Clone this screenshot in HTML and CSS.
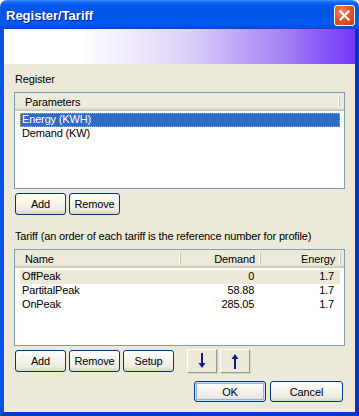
FILE: index.html
```html
<!DOCTYPE html>
<html>
<head>
<meta charset="utf-8">
<title>Register/Tariff</title>
<link rel="stylesheet" href="styles.css">
</head>
<body>
<div class="window">
  <div class="titlebar">
    <span class="title">Register/Tariff</span>
    <span class="close"><svg width="11" height="11" viewBox="0 0 11 11"><path d="M1.5 1.5L9.5 9.5M9.5 1.5L1.5 9.5" stroke="#fff" stroke-width="2.2" stroke-linecap="square"/></svg></span>
  </div>
  <div class="frame">
    <div class="banner"></div>
    <div class="content">
      <div class="label label-reg">Register</div>
      <div class="listbox">
        <div class="lv-head">
          <div class="hcol col-param">Parameters</div>
        </div>
        <div class="lv-body">
          <div class="row focused"><div class="cell col-param">Energy (KWH)</div></div>
          <div class="row"><div class="cell col-param">Demand (KW)</div></div>
        </div>
      </div>
      <div class="btnrow">
        <button class="btn btn-std">Add</button>
        <button class="btn btn-std">Remove</button>
      </div>
      <div class="label label-tariff">Tariff (an order of each tariff is the reference number for profile)</div>
      <div class="listbox">
        <div class="lv-head">
          <div class="hcol col-name">Name</div>
          <div class="hcol col-num">Demand</div>
          <div class="hcol col-num">Energy</div>
        </div>
        <div class="lv-body">
          <div class="row inactive-sel"><div class="cell col-name">OffPeak</div><div class="cell col-num">0</div><div class="cell col-num">1.7</div></div>
          <div class="row"><div class="cell col-name">PartitalPeak</div><div class="cell col-num">58.88</div><div class="cell col-num">1.7</div></div>
          <div class="row"><div class="cell col-name">OnPeak</div><div class="cell col-num">285.05</div><div class="cell col-num">1.7</div></div>
        </div>
      </div>
      <div class="btnrow">
        <button class="btn btn-std">Add</button>
        <button class="btn btn-std">Remove</button>
        <button class="btn btn-std">Setup</button>
        <button class="arrowbtn arrow-first"><svg width="8" height="16" viewBox="0 0 8 16"><path d="M3 0H5V10H7.5L4 15L0.5 10H3Z" fill="#0a1a8a"/></svg></button>
        <button class="arrowbtn"><svg width="8" height="16" viewBox="0 0 8 16"><path d="M3 16H5V6H7.5L4 1L0.5 6H3Z" fill="#0a1a8a"/></svg></button>
      </div>
      <div class="dlgrow">
        <button class="btn btn-ok">OK</button>
        <button class="btn btn-cancel">Cancel</button>
      </div>
    </div>
  </div>
</div>
</body>
</html>
```
FILE: styles.css
```css
* { box-sizing: border-box; }
html, body { margin: 0; padding: 0; background: #ffffff; }
body {
  font-family: "Liberation Sans", Arial, sans-serif;
  font-size: 11px;
  letter-spacing: -0.15px;
  color: #000;
}
.window {
  width: 359px;
  height: 416px;
  display: flex;
  flex-direction: column;
  border-radius: 7px 7px 0 0;
  overflow: hidden;
}
.titlebar {
  height: 29px;
  flex: 0 0 29px;
  display: flex;
  align-items: center;
  justify-content: space-between;
  padding: 1px 4px 0 6px;
  background: linear-gradient(180deg, #3d95ff 0, #1a6cf8 2px, #0058ee 5px, #0054e8 45%, #005af2 80%, #0048d8 100%);
}
.title {
  color: #fff;
  font-weight: bold;
  font-size: 13px;
  letter-spacing: 0;
  text-shadow: 1px 1px 0 #0a1e80;
  padding-top: 1px;
}
.close {
  width: 21px;
  height: 21px;
  border: 1px solid #fff;
  border-radius: 3px;
  background: radial-gradient(circle at 35% 30%, #f08a68 0, #e2582f 45%, #c93a12 100%);
  display: flex;
  align-items: center;
  justify-content: center;
}
.frame {
  flex: 1;
  display: flex;
  flex-direction: column;
  border-left: 4px solid #0852e6;
  border-right: 4px solid #0833c8;
  border-bottom: 4px solid #0a38cc;
  background: #ece9d8;
}
.banner {
  height: 35px;
  flex: 0 0 35px;
  background: linear-gradient(90deg, #ffffff 0, #ffffff 22%, #ddd1fa 52%, #a886f4 78%, #7437f7 100%);
}
.content {
  flex: 1;
  display: flex;
  flex-direction: column;
  padding: 0 10px;
}
.label { line-height: 13px; height: 13px; padding-left: 1px; }
.label-reg { margin-top: 9px; }
.label-tariff { margin-top: 15px; }
.listbox {
  margin-top: 6px;
  height: 97px;
  border: 1px solid #7f9db9;
  background: #fff;
}
.listbox + .btnrow { margin-top: 4px; }
.lv-head {
  height: 18px;
  display: flex;
  background: #ebeadb;
  box-shadow: inset 0 -1px 0 #cbc7b8, inset 0 -2px 0 #d6d2c2, inset 0 -3px 0 #e2decd;
}
.hcol {
  height: 18px;
  line-height: 18px;
  position: relative;
}
.hcol::after {
  content: "";
  position: absolute;
  right: 0;
  top: 3px;
  bottom: 4px;
  width: 1px;
  background: #c7c5b2;
  box-shadow: -1px 0 0 #fff;
}
.col-param { width: 325px; padding-left: 10px; }
.col-name { width: 166px; padding-left: 10px; }
.col-num { width: 80px; text-align: right; padding-right: 6px; }
.lv-body { padding-top: 2px; }
.row {
  display: flex;
  height: 14px;
  line-height: 13px;
  margin-left: 5px;
  width: 320px;
}
.row .col-param, .row .col-name { padding-left: 2px; }
.row .col-param { width: 320px; }
.row .col-name { width: 161px; }
.row .col-num { width: 80px; }
.focused {
  background: #316ac5;
  color: #fff;
  border: 1px dotted #e9a24c;
}
.focused .cell { margin-top: -1px; padding-left: 1px; }
.inactive-sel { background: #ece9d8; }
.btnrow {
  display: flex;
  gap: 3px;
  padding-left: 1px;
}
.btn {
  font-family: "Liberation Sans", Arial, sans-serif;
  font-size: 11px;
  letter-spacing: -0.15px;
  color: #000;
  border: 1px solid #003c74;
  border-radius: 3px;
  background: linear-gradient(180deg, #ffffff 0, #f6f5f0 40%, #eceae2 80%, #d8d3c8 100%);
  padding: 0;
  margin: 0;
}
.btn-std { width: 51px; height: 22px; }
.arrowbtn {
  width: 30px;
  height: 24px;
  margin: -1px 0 0 0;
  padding: 0;
  background: #ece9d8;
  border-top: 1px solid #fff;
  border-left: 1px solid #fff;
  border-right: 1px solid #9d9a8a;
  border-bottom: 1px solid #9d9a8a;
  box-shadow: 1px 1px 0 #d4d0c4;
  display: flex;
  align-items: center;
  justify-content: center;
}
.arrow-first { margin-left: 10px; }
.dlgrow {
  margin-top: 8px;
  display: flex;
  justify-content: flex-end;
  gap: 4px;
  padding-right: 2px;
}
.btn-ok { width: 72px; height: 21px; box-shadow: inset 0 0 0 1px #cfe0fb, inset 0 0 0 2px #8db2ee; }
.btn-cancel { width: 73px; height: 21px; }
```
